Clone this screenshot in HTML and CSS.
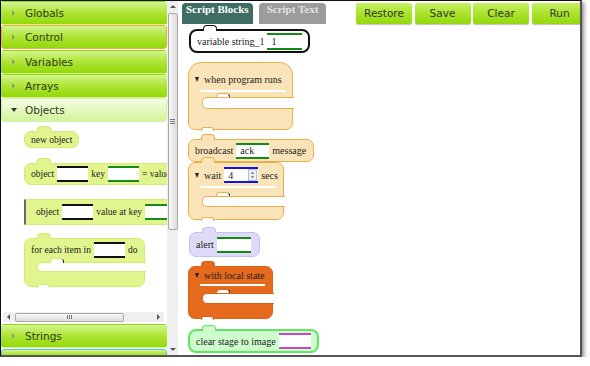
FILE: index.html
```html
<!DOCTYPE html>
<html>
<head>
<meta charset="utf-8">
<title>Script editor</title>
<link rel="stylesheet" href="styles.css">
</head>
<body>
<div class="frame">
  <aside class="sidebar">
    <div class="acc">
      <div class="hdr"><span class="arr"></span>Globals</div>
      <div class="hdr hdr-focus"><span class="arr"></span>Control</div>
      <div class="hdr"><span class="arr"></span>Variables</div>
      <div class="hdr"><span class="arr"></span>Arrays</div>
      <div class="hdr hdr-open"><span class="arr arr-down"></span>Objects</div>
      <div class="flyout">
        <div class="fly-blocks">
          <div class="fb fb-new nb">new object</div>
          <div class="fb fb-obj nb">object <span class="inp inp-black fi"></span> key <span class="inp inp-green fi"></span> = value</div>
          <div class="fb fb-get">object <span class="inp inp-black fi"></span> value at key <span class="inp inp-green fi"></span></div>
          <div class="fb-c fb-each nb nd">
            <div class="row">for each item in <span class="inp inp-black fi"></span> do</div>
            <div class="slot"></div>
            <div class="foot"></div>
          </div>
        </div>
        <div class="hscroll">
          <span class="ha ha-l"></span>
          <span class="hthumb"><span class="hgrip"></span></span>
          <span class="hfill"></span>
          <span class="ha ha-r"></span>
        </div>
      </div>
      <div class="hdr"><span class="arr"></span>Strings</div>
      <div class="hdr hdr-cyan"></div>
    </div>
    <div class="vscroll">
      <span class="va va-up"></span>
      <span class="vthumb"><span class="vgrip"></span></span>
      <span class="vfill"></span>
      <span class="va va-down"></span>
    </div>
  </aside>

  <main class="workspace">
    <div class="topbar">
      <div class="tabs">
        <div class="tab tab-on">Script Blocks</div>
        <div class="tab tab-off">Script Text</div>
      </div>
      <div class="btns">
        <div class="btn">Restore</div>
        <div class="btn">Save</div>
        <div class="btn">Clear</div>
        <div class="btn">Run</div>
      </div>
    </div>
    <div class="canvas">
      <div class="blk b-var nb">variable string_1 <span class="inp inp-green in-var">1</span></div>

      <div class="cb b-hat nd">
        <div class="row"><i class="dd"></i>when program runs</div>
        <div class="sep"></div>
        <div class="slot"></div>
        <div class="foot"></div>
      </div>

      <div class="blk b-bc nb nd">broadcast <span class="inp inp-green in-bc">ack</span> message</div>

      <div class="cb b-wait nb nd">
        <div class="row"><i class="dd"></i>wait <span class="inp inp-blue in-wait">4<svg class="spin" width="9" height="12" viewBox="0 0 9 12"><rect x="0.5" y="0.5" width="8" height="11" fill="#eef0f6" stroke="#b8bccc"/><path d="M2.5 5 L4.5 2.5 L6.5 5 Z M2.5 7 L4.5 9.5 L6.5 7 Z" fill="#8a90a8"/></svg></span> secs</div>
        <div class="sep"></div>
        <div class="slot"></div>
        <div class="foot"></div>
      </div>

      <div class="blk b-alert nb">alert <span class="inp inp-green in-alert"></span></div>

      <div class="cb b-local nb nd">
        <div class="row"><i class="dd"></i>with local state</div>
        <div class="sep"></div>
        <div class="slot"></div>
        <div class="foot"></div>
      </div>

      <div class="blk b-clear nb">clear stage to image <span class="inp inp-mag in-clear"></span></div>
    </div>
  </main>
</div>
</body>
</html>
```

FILE: styles.css
```css
html, body {
  margin: 0;
  padding: 0;
  background: #fff;
}

.frame {
  width: 579px;
  height: 354px;
  border-top: 1px solid #111;
  border-left: 1px solid #111;
  border-right: 2px solid #555;
  border-bottom: 2px solid #555;
  box-shadow: 2px 2px 4px rgba(0, 0, 0, 0.45);
  display: flex;
  overflow: hidden;
  background: #fff;
}

/* ---------- sidebar ---------- */
.sidebar {
  display: flex;
  width: 177px;
  flex-shrink: 0;
}

.acc {
  width: 166px;
  display: flex;
  flex-direction: column;
  overflow: hidden;
}

.hdr {
  box-sizing: border-box;
  height: 24px;
  margin-bottom: 0.25px;
  flex-shrink: 0;
  border: 1px solid transparent;
  border-radius: 3px;
  display: flex;
  align-items: center;
  padding-left: 9px;
  font: 10.5px "DejaVu Sans", Verdana, sans-serif;
  color: #2e3a1a;
  background: linear-gradient(#d4f392 0%, #b0e63a 45%, #93d80a 100%);
}

.hdr-focus {
  border-color: #eeb13e;
}

.hdr-open {
  background: linear-gradient(#f5fde6 0%, #e4f9c0 50%, #d3f39c 100%);
  border-color: #d6f0a8;
}

.hdr-cyan {
  border-color: #55c6e8;
  height: 10px;
}

.arr {
  width: 0;
  height: 0;
  border-left: 3px solid #8b9b6e;
  border-top: 3px solid transparent;
  border-bottom: 3px solid transparent;
  margin-right: 10px;
  margin-left: 1px;
}

.arr-down {
  border-left: 3px solid transparent;
  border-right: 3px solid transparent;
  border-top: 4px solid #333;
  border-bottom: 0;
  margin-left: 0;
  margin-right: 8px;
}

.flyout {
  height: 202px;
  flex-shrink: 0;
  display: flex;
  flex-direction: column;
  background: #fff;
}

.fly-blocks {
  height: 190px;
  overflow: hidden;
  display: flex;
  flex-direction: column;
  align-items: flex-start;
  padding: 9px 0 0 23px;
  box-sizing: border-box;
}

.fb, .fb-c {
  position: relative;
  box-sizing: border-box;
  flex-shrink: 0;
  background: #e1f58f;
  border: 1.5px solid #d2ec72;
  border-radius: 7px;
  font: 9.5px "Liberation Serif", "Times New Roman", serif;
  color: #222;
  white-space: nowrap;
}

.fb {
  display: flex;
  align-items: center;
  gap: 3px;
  padding: 0 6px;
}

.fb-new { height: 17px; }
.fb-obj { height: 22px; margin-top: 15px; padding-right: 20px; }
.fb-get {
  height: 26px;
  margin-top: 14px;
  border-left: 2px solid #6a6a6a;
  border-radius: 0 7px 7px 0;
  padding-left: 10px;
  padding-right: 20px;
}

.fb-each {
  width: 121px;
  height: 49px;
  margin-top: 13px;
}

.fb-each .row {
  display: flex;
  align-items: center;
  gap: 3px;
  height: 16px;
  padding: 3px 0 0 6px;
}

.fb-each .slot {
  margin-top: 4px;
  height: 10px;
  margin-left: 11.5px;
}

.fb-each .slot::before { left: 12px; }

.fi {
  width: 31px;
  height: 15px;
}

.hscroll {
  height: 10px;
  margin: 0 3px 0 2px;
  background: #efefef;
  display: flex;
  align-items: center;
}

.ha {
  width: 0;
  height: 0;
  border-top: 3px solid transparent;
  border-bottom: 3px solid transparent;
}

.ha-l { border-right: 3px solid #555; margin: 0 5px 0 4px; }
.ha-r { border-left: 3px solid #555; margin: 0 4px 0 5px; }

.hthumb {
  box-sizing: border-box;
  width: 109px;
  height: 9px;
  border: 1px solid #a9a9a9;
  border-radius: 2px;
  background: linear-gradient(#f7f7f7, #dcdcdc);
  display: flex;
  align-items: center;
  justify-content: center;
}

.hgrip {
  width: 5px;
  height: 4px;
  background: repeating-linear-gradient(90deg, #777 0 1px, transparent 1px 2px);
}

.hfill { flex: 1; }

.vscroll {
  width: 11px;
  background: #efefef;
  display: flex;
  flex-direction: column;
  align-items: center;
}

.va {
  width: 0;
  height: 0;
  border-left: 3px solid transparent;
  border-right: 3px solid transparent;
}

.va-up { border-bottom: 3px solid #555; margin: 4px 0 4px; }
.va-down { border-top: 3px solid #555; margin: 4px 0 4px; }

.vthumb {
  box-sizing: border-box;
  width: 10px;
  height: 217px;
  margin-top: 1px;
  border: 1px solid #a9a9a9;
  border-radius: 2px;
  background: linear-gradient(90deg, #f7f7f7, #dcdcdc);
  display: flex;
  align-items: center;
  justify-content: center;
}

.vgrip {
  width: 5px;
  height: 5px;
  background: repeating-linear-gradient(#777 0 1px, transparent 1px 2px);
}

.vfill { flex: 1; }

/* ---------- workspace ---------- */
.workspace {
  flex: 1;
  margin-left: 2px;
  display: flex;
  flex-direction: column;
  overflow: hidden;
  min-width: 0;
}

.topbar {
  display: flex;
  height: 21px;
  padding: 2px 0 0 2px;
  flex-shrink: 0;
}

.tabs {
  display: flex;
  gap: 6px;
  width: 174px;
  flex-shrink: 0;
}

.tab {
  height: 21px;
  line-height: 22px;
  padding: 0 4px;
  border-radius: 4px 4px 0 0;
  font: bold 11px "Liberation Serif", "Times New Roman", serif;
  white-space: nowrap;
}

.tab-on {
  background: #3e6d64;
  color: #fff;
}

.tab-off {
  background: #9c9c9c;
  color: #e2e2e2;
  padding: 0 8px;
}

.btns {
  display: flex;
  gap: 2.5px;
  flex-shrink: 0;
}

.btn {
  width: 56px;
  height: 21px;
  flex-shrink: 0;
  box-sizing: border-box;
  border-radius: 2px;
  background: linear-gradient(#c6ef64 0%, #abe32c 50%, #93d80c 100%);
  box-shadow: 0 1px 1px rgba(0, 0, 0, 0.25);
  font: 10.5px "DejaVu Sans", Verdana, sans-serif;
  color: #333;
  text-align: center;
  line-height: 21px;
}

.canvas {
  position: relative;
  flex: 1;
}

/* ---------- blocks ---------- */
.blk, .cb {
  position: absolute;
  box-sizing: border-box;
  border: 1.5px solid;
  border-radius: 7px;
  font: 10px "Liberation Serif", "Times New Roman", serif;
  color: #222;
  white-space: nowrap;
}

.blk {
  display: flex;
  align-items: center;
  gap: 3px;
  padding: 0 6px;
}

/* top bump */
.nb::before {
  content: "";
  position: absolute;
  top: -6px;
  left: 12px;
  width: 12px;
  height: 4.5px;
  background: inherit;
  border: 1.5px solid;
  border-color: inherit;
  border-bottom: none;
  border-radius: 4px 4px 0 0;
}

/* bottom dent */
.nd::after {
  content: "";
  position: absolute;
  bottom: -1.5px;
  left: 12px;
  width: 11px;
  height: 2.5px;
  background: #fff;
  border: 1.5px solid;
  border-color: inherit;
  border-bottom: none;
  border-radius: 3px 3px 0 0;
}

.cb .row {
  display: flex;
  align-items: center;
  gap: 3px;
  height: 16px;
  padding-left: 6px;
}

.cb .sep {
  height: 1.5px;
  background: #fff;
  margin: 0 7.5px 0 10.5px;
}

.slot {
  position: relative;
  background: #fff;
  border: 1.5px solid;
  border-color: inherit;
  border-right: none;
  border-radius: 5px 0 0 5px;
  margin-right: -2px;
  margin-left: 12.5px;
  box-sizing: border-box;
}

.slot::before {
  content: "";
  position: absolute;
  top: -5px;
  left: 13px;
  width: 12px;
  height: 3.5px;
  background: #fff;
  border: 1.5px solid;
  border-color: inherit;
  border-bottom: none;
  border-radius: 4px 4px 0 0;
}

.dd {
  width: 0;
  height: 0;
  border-left: 2.5px solid transparent;
  border-right: 2.5px solid transparent;
  border-top: 5px solid #222;
  margin-right: 2px;
}

.inp {
  box-sizing: border-box;
  display: inline-flex;
  align-items: center;
  background: #fff;
  border-top: 2.5px solid;
  border-bottom: 2.5px solid;
  padding: 0 4px;
  height: 16px;
}

.inp-green { border-color: #158a15; }
.inp-black { border-color: #111; }
.inp-blue { border-color: #1414d8; }
.inp-mag { border-color: #cc44cc; }

/* canvas block placement */
.b-var {
  left: 9px;
  top: 5px;
  width: 121px;
  height: 24px;
  background: #fff;
  border: 2px solid #111;
  border-radius: 8px;
}
.in-var { width: 35px; height: 17px; }

.peach {
  background: #f9e4b9;
}

.b-hat {
  left: 8px;
  top: 38px;
  width: 105px;
  height: 68px;
  background: #f9e4b9;
  border-color: #e8b04b;
  border-radius: 13px 13px 7px 7px;
  padding-top: 8px;
}
.b-hat .sep { margin-top: 3px; }
.b-hat .slot { margin-top: 5px; height: 12px; }

.b-bc {
  left: 8px;
  top: 115px;
  width: 126px;
  height: 23px;
  background: #f9e4b9;
  border-color: #e8b04b;
}
.in-bc { width: 33px; }

.b-wait {
  left: 8px;
  top: 138px;
  width: 96px;
  height: 58px;
  background: #f9e4b9;
  border-color: #e8b04b;
  padding-top: 4px;
}
.b-wait .sep { margin-top: 3px; }
.b-wait .slot { margin-top: 8px; height: 11px; }
.in-wait {
  width: 34px;
  justify-content: space-between;
  padding: 0 1px 0 4px;
}

.b-alert {
  left: 9px;
  top: 208px;
  width: 71px;
  height: 25px;
  background: #dddbf8;
  border-color: #c3c1ef;
}
.in-alert { width: 34px; }

.b-local {
  left: 8px;
  top: 242px;
  width: 85px;
  height: 53px;
  background: #e56a1e;
  border-color: #dc621a;
}
.b-local .sep { margin-top: 1px; }
.b-local .slot { margin-top: 7px; height: 11px; }

.b-clear {
  left: 8px;
  top: 305px;
  width: 131px;
  height: 24px;
  background: #cdfccd;
  border: 2px solid #5fe85f;
  border-radius: 8px;
}
.in-clear { width: 33px; height: 16px; }
```
